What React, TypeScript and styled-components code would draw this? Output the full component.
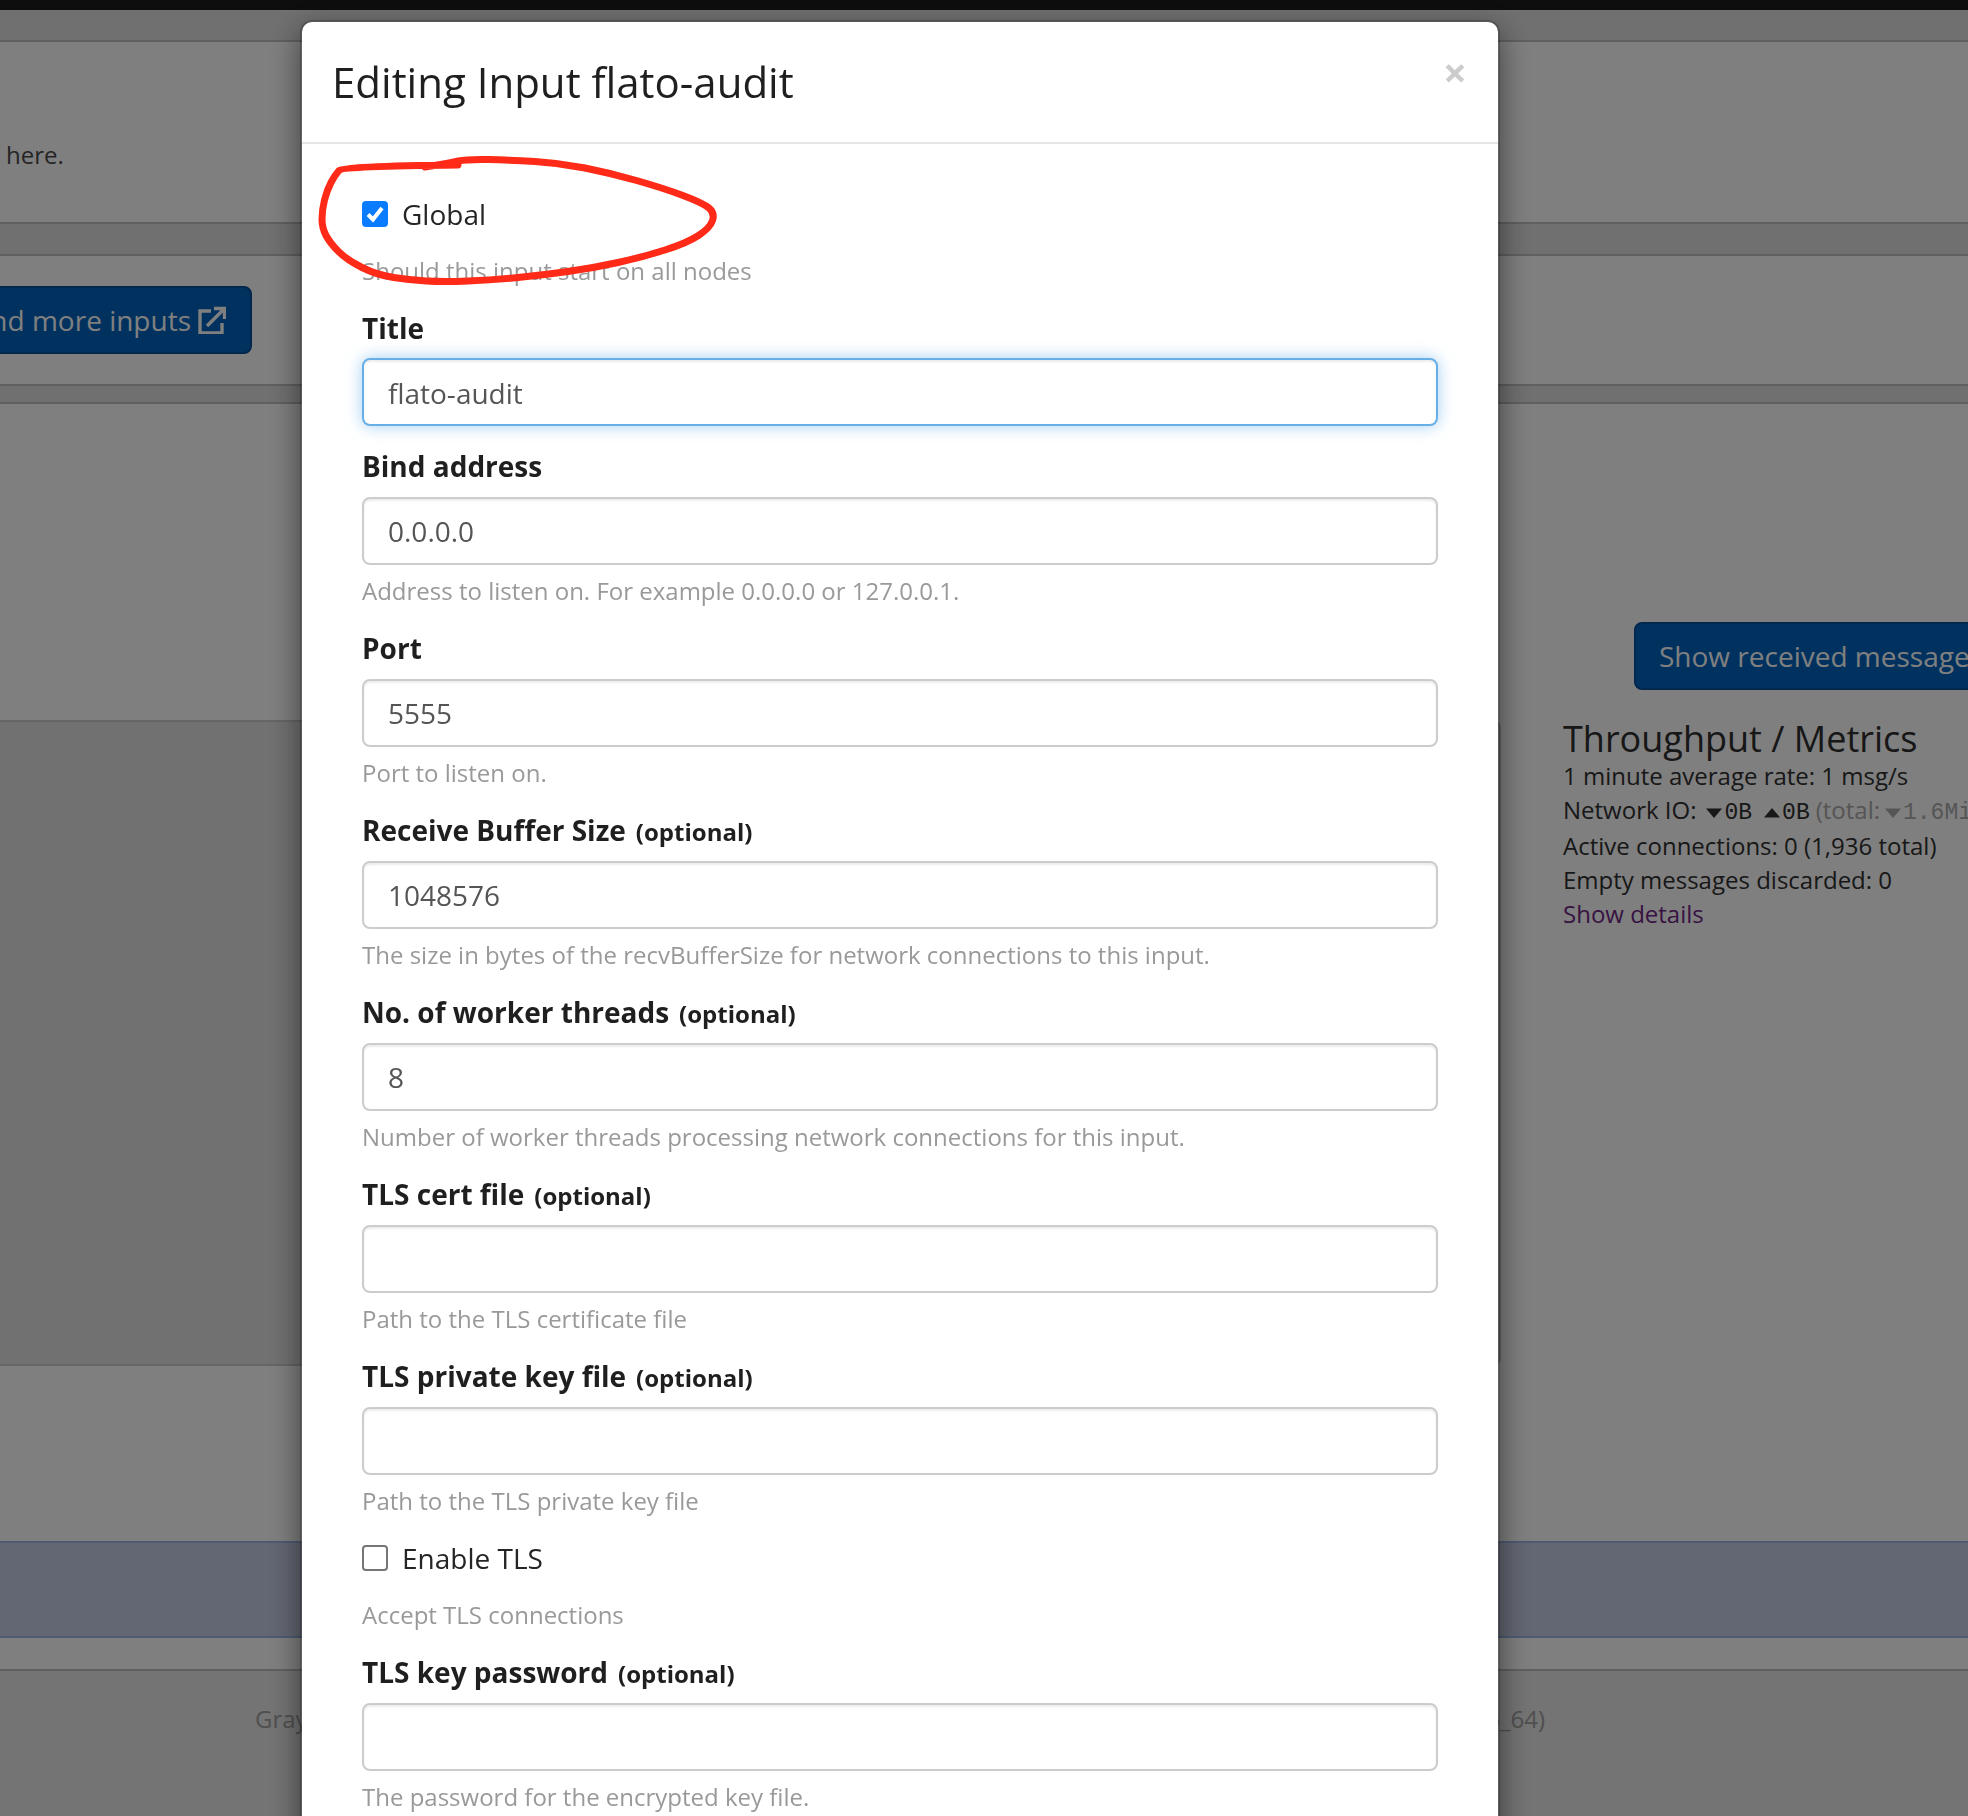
import * as React from 'react';
import styled, { createGlobalStyle } from 'styled-components';

const GlobalStyle = createGlobalStyle`
    html, body {
        margin: 0;
        height: 1816px;
        overflow: hidden;
        background: #e8e8e8;
        font-family: "Open Sans", "Liberation Sans", sans-serif;
        color: #303030;
    }
    * {
        box-sizing: border-box;
    }
`;

const TopBar = styled.div`
    height: 10px;
    background: #1c1c1c;
`;

const Page = styled.div`
    background: #e0e0e0;
    padding-top: 30px;
`;

const Section = styled.section<{ $height?: number; $gapBelow: number }>`
    background: #fff;
    border-top: 2px solid #c0c0c0;
    border-bottom: 2px solid #c0c0c0;
    margin-bottom: ${({ $gapBelow }) => $gapBelow}px;
    ${({ $height }) => $height ? `height: ${$height}px;` : ''}
`;

const IntroText = styled.p`
    margin: 0;
    padding: 96px 0 0 6px;
    font-size: 24px;
    line-height: 34px;
    color: #4a4a4a;
`;

const ButtonSlot = styled.div`
    display: flex;
    justify-content: flex-end;
    width: 252px;
    padding-top: 30px;
`;

const PrimaryButton = styled.a`
    display: flex;
    flex: none;
    align-items: center;
    gap: 7px;
    height: 68px;
    padding: 0 23px;
    background: #0063be;
    border: 2px solid #004f9b;
    border-radius: 8px;
    color: #fff;
    font-size: 28px;
    white-space: nowrap;
`;

const ExternalIcon = styled.svg`
    width: 28px;
    height: 28px;
    margin-right: 1px;
    fill: none;
    stroke: currentColor;
    stroke-width: 3.4;
`;

const MessagesAction = styled.div`
    display: flex;
    padding: 218px 0 30px 1634px;
`;

const DetailRow = styled.div`
    display: flex;
`;

const Well = styled.div`
    flex: none;
    width: 1501px;
    height: 646px;
    background: #e2e2e2;
    border: 2px solid #ccc;
    border-left: 0;
    border-radius: 0 8px 8px 0;
`;

const Metrics = styled.div`
    flex: none;
    padding: 1px 0 0 62px;
    white-space: nowrap;
`;

const MetricsTitle = styled.h3`
    margin: 0 0 2px;
    font-size: 36px;
    font-weight: 400;
    line-height: 36px;
    color: #2e2e2e;
`;

const MetricLine = styled.div<{ $tall?: boolean }>`
    height: ${({ $tall }) => $tall ? 36 : 34}px;
    font-size: 24px;
    line-height: 34px;
`;

const MetricLink = styled.a`
    color: #702785;
`;

const Mono = styled.span`
    font-family: "Liberation Mono", monospace;
    font-size: 23px;
`;

const Muted = styled.span`
    color: #aaa;
    margin-left: 6px;
`;

const Caret = styled.svg<{ $gap: number }>`
    width: 18px;
    height: 12px;
    margin: 0 1px 0 ${({ $gap }) => $gap}px;
    fill: currentColor;
`;

const Notice = styled.div`
    height: 97px;
    margin: 175px 0 31px;
    background: #c6cee6;
    border-top: 2px solid #9eb6e6;
    border-bottom: 2px solid #9eb6e6;
`;

const Footer = styled.footer`
    display: flex;
    justify-content: space-between;
    padding: 31px 423px 0 255px;
    font-size: 24px;
    line-height: 34px;
    color: #a0a0a0;
    white-space: nowrap;
`;

const Backdrop = styled.div`
    position: fixed;
    inset: 0;
    background: rgba(0, 0, 0, 0.5);
    overflow: hidden;
`;

const Modal = styled.div`
    position: absolute;
    top: 20px;
    left: 300px;
    width: 1200px;
    min-height: 1900px;
    background: #fff;
    background-clip: padding-box;
    border: 2px solid rgba(0, 0, 0, 0.2);
    border-radius: 12px;
    box-shadow: 0 10px 30px rgba(0, 0, 0, 0.5);
`;

const ModalHeader = styled.header`
    display: flex;
    align-items: center;
    justify-content: space-between;
    height: 122px;
    padding: 0 31px 0 30px;
    border-bottom: 2px solid #e5e5e5;
`;

const ModalTitle = styled.h4`
    margin: 0 0 2px;
    font-size: 42px;
    font-weight: 400;
    color: #1f1f1f;
`;

const CloseButton = styled.button`
    margin-top: -20px;
    padding: 0;
    border: 0;
    background: none;
    font-family: inherit;
    font-size: 42px;
    font-weight: 700;
    line-height: 1;
    color: #ccc;
`;

const ModalBody = styled.div`
    padding: 52px 60px 0;
`;

const CheckRow = styled.label`
    display: flex;
    align-items: center;
    gap: 14px;
    height: 36px;
    margin-bottom: 22px;
    font-size: 28px;
    color: #252525;
`;

const CheckBox = styled.span<{ $checked?: boolean }>`
    display: flex;
    flex: none;
    align-items: center;
    justify-content: center;
    width: 26px;
    height: 26px;
    border-radius: 4px;
    background: ${({ $checked }) => $checked ? '#0a7cff' : '#fff'};
    border: ${({ $checked }) => $checked ? '0' : '2px solid #767676'};
`;

const FieldLabel = styled.label`
    display: block;
    height: 36px;
    margin-bottom: 13px;
    font-size: 28px;
    font-weight: 700;
    line-height: 36px;
    color: #1f1f1f;
`;

const Optional = styled.span`
    margin-left: 10px;
    font-size: 24px;
`;

const TextInput = styled.input<{ $focused?: boolean }>`
    display: block;
    width: 100%;
    height: 68px;
    padding: 0 24px;
    font-family: inherit;
    font-size: 28px;
    color: #555;
    background: #fff;
    border: 2px solid ${({ $focused }) => $focused ? '#66afe9' : '#ccc'};
    border-radius: 8px;
    outline: none;
    box-shadow: ${({ $focused }) => $focused
        ? 'inset 0 2px 2px rgba(0, 0, 0, 0.075), 0 0 16px rgba(102, 175, 233, 0.6)'
        : 'inset 0 2px 2px rgba(0, 0, 0, 0.075)'};
`;

const TitleInput = styled(TextInput)`
    margin-top: -1px;
    padding-top: 2px;
`;

const Help = styled.p<{ $flush?: boolean }>`
    height: 34px;
    margin: ${({ $flush }) => $flush ? 0 : '9px'} 0 22px;
    font-size: 24px;
    line-height: 34px;
    color: #999;
`;

const Spacer = styled.div`
    height: 22px;
`;

const Annotation = styled.svg`
    position: absolute;
    left: 316px;
    top: 154px;
    width: 406px;
    height: 134px;
    fill: none;
    stroke: #ff2a17;
    stroke-width: 7;
    stroke-linecap: round;
    stroke-linejoin: round;
`;

const ringPoints: [number, number][] = [
    [458, 165], [343, 166], [335, 175], [327, 190], [322, 210], [322, 228], [330, 243], [347, 260],
    [377, 275], [410, 280], [443, 282], [493, 280], [543, 275], [593, 268], [643, 257], [687, 243],
    [710, 228], [715, 213], [703, 203], [663, 188], [610, 173], [560, 163], [510, 160], [467, 159],
    [450, 163], [425, 167],
];

const ringPath = ringPoints.reduce((d, [x, y], i) => {
    if (i === 0) return `M${x} ${y}`;
    const [nx, ny] = ringPoints[i + 1] ?? [x, y];
    return `${d} Q${x} ${y} ${(x + nx) / 2} ${(y + ny) / 2}`;
}, '');

const fields = [
    { label: 'Bind address', value: '0.0.0.0', help: 'Address to listen on. For example 0.0.0.0 or 127.0.0.1.' },
    { label: 'Port', value: '5555', help: 'Port to listen on.' },
    { label: 'Receive Buffer Size', optional: true, value: '1048576', help: 'The size in bytes of the recvBufferSize for network connections to this input.' },
    { label: 'No. of worker threads', optional: true, value: '8', help: 'Number of worker threads processing network connections for this input.' },
    { label: 'TLS cert file', optional: true, value: '', help: 'Path to the TLS certificate file' },
    { label: 'TLS private key file', optional: true, value: '', help: 'Path to the TLS private key file' },
];

const CaretDown = ({ gap = 9 }: { gap?: number }) => (
    <Caret $gap={gap} viewBox="0 0 18 12"><path d="M1 1.5h16L9 11z" /></Caret>
);

const CaretUp = () => (
    <Caret $gap={11} viewBox="0 0 18 12"><path d="M1 10.5h16L9 1z" /></Caret>
);

const Field = ({ label, optional, value, help }: { label: string; optional?: boolean; value: string; help: string }) => (
    <>
        <FieldLabel>
            {label}
            {optional && <Optional>(optional)</Optional>}
        </FieldLabel>
        <TextInput defaultValue={value} readOnly />
        <Help>{help}</Help>
    </>
);

export default function App() {
    return (
        <>
            <GlobalStyle />
            <TopBar />
            <Page>
                <Section $height={184} $gapBelow={30}>
                    <IntroText>here.</IntroText>
                </Section>
                <Section $height={132} $gapBelow={16}>
                    <ButtonSlot>
                        <PrimaryButton>
                            Find more inputs
                            <ExternalIcon viewBox="0 0 28 28">
                                <path d="M13 5H2v22h22V17" />
                                <path d="M9 20 25 4" />
                                <path d="M16 2.5h10.5V13" />
                            </ExternalIcon>
                        </PrimaryButton>
                    </ButtonSlot>
                </Section>
                <Section $gapBelow={0}>
                    <MessagesAction>
                        <PrimaryButton>Show received messages</PrimaryButton>
                    </MessagesAction>
                    <DetailRow>
                        <Well />
                        <Metrics>
                            <MetricsTitle>Throughput / Metrics</MetricsTitle>
                            <MetricLine>1 minute average rate: 1 msg/s</MetricLine>
                            <MetricLine $tall>
                                Network IO:
                                <CaretDown /><Mono>0B</Mono>
                                <CaretUp /><Mono>0B</Mono>
                                <Muted>(total:<CaretDown gap={4} /><Mono>1.6MiB</Mono></Muted>
                            </MetricLine>
                            <MetricLine>Active connections: 0 (1,936 total)</MetricLine>
                            <MetricLine>Empty messages discarded: 0</MetricLine>
                            <MetricLine><MetricLink>Show details</MetricLink></MetricLine>
                        </Metrics>
                    </DetailRow>
                    <Notice />
                </Section>
            </Page>
            <Footer>
                <span>Graylog 3.1.2 on flato-graylog</span>
                <span>Linux x86_64)</span>
            </Footer>
            <Backdrop>
                <Modal>
                    <ModalHeader>
                        <ModalTitle>Editing Input flato-audit</ModalTitle>
                        <CloseButton>×</CloseButton>
                    </ModalHeader>
                    <ModalBody>
                        <CheckRow>
                            <CheckBox $checked>
                                <svg width="20" height="18" viewBox="0 0 20 18" fill="none" stroke="#fff" strokeWidth="4">
                                    <path d="M3 9.5 8 14.5 17 3" />
                                </svg>
                            </CheckBox>
                            Global
                        </CheckRow>
                        <Help $flush>Should this input start on all nodes</Help>
                        <FieldLabel>Title</FieldLabel>
                        <TitleInput $focused defaultValue="flato-audit" readOnly />
                        <Spacer />
                        {fields.map((f) => <Field key={f.label} {...f} />)}
                        <CheckRow>
                            <CheckBox />
                            Enable TLS
                        </CheckRow>
                        <Help $flush>Accept TLS connections</Help>
                        <Field label="TLS key password" optional value="" help="The password for the encrypted key file." />
                    </ModalBody>
                </Modal>
                <Annotation viewBox="316 154 406 134">
                    <path d={ringPath} />
                </Annotation>
            </Backdrop>
        </>
    );
}
